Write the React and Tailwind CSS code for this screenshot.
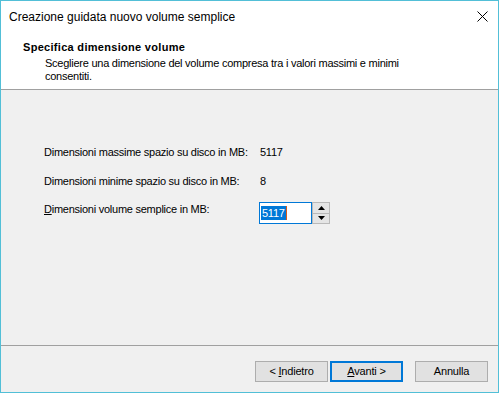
import React from "react";

const font = { fontFamily: '"Liberation Sans", Arial, sans-serif' };

const WizButton = ({ children, primary }) => (
  <button
    className={
      primary
        ? "w-[73px] h-[21px] bg-[#e1e1e1] border-2 border-[#0078d7] text-[11px] leading-[13px] tracking-[-0.2px] text-black"
        : "w-[73px] h-[21px] bg-[#e1e1e1] border border-[#adadad] text-[11px] leading-[13px] tracking-[-0.2px] text-black"
    }
  >
    {children}
  </button>
);

const SpinBox = () => (
  <div className="flex h-[22px] mt-[-1px]">
    <div className="w-[53px] h-[22px] bg-white border border-[#0078d7] flex items-center pl-[1px]">
      <span className="bg-[#0078d7] text-white text-[11px] leading-[14px] px-[1px]">5117</span>
      <span className="w-[1px] h-[14px] bg-[#d65a1a]" />
    </div>
    <div className="w-[18px] h-[22px] flex flex-col border border-[#b9b9b9] bg-[#e5e5e5]">
      <div className="flex-1 flex items-center justify-center border-b border-[#b9b9b9]">
        <svg width="7" height="4" viewBox="0 0 7 4">
          <path d="M0 4 L3.5 0 L7 4 Z" fill="#000" />
        </svg>
      </div>
      <div className="flex-1 flex items-center justify-center">
        <svg width="7" height="4" viewBox="0 0 7 4">
          <path d="M0 0 L7 0 L3.5 4 Z" fill="#000" />
        </svg>
      </div>
    </div>
  </div>
);

export default function App() {
  return (
    <div
      className="w-[499px] h-[393px] border border-[#52bfd7] flex flex-col bg-[#f0f0f0] text-black"
      style={font}
    >
      {/* title bar */}
      <div className="h-[30px] bg-white flex items-center justify-between pl-[8px] pr-[10px]">
        <span className="text-[12px] leading-[14px] pt-[1px]">Creazione guidata nuovo volume semplice</span>
        <svg width="11" height="11" viewBox="0 0 11 11" className="mt-[1px]">
          <path d="M0.5 0.5 L10.5 10.5 M10.5 0.5 L0.5 10.5" stroke="#000" strokeWidth="1" />
        </svg>
      </div>

      {/* header */}
      <div className="h-[59px] bg-white border-b border-[#a0a0a0] pt-[10px] pl-[22px]">
        <div className="text-[11px] leading-[13px] font-bold tracking-[0.3px]">Specifica dimensione volume</div>
        <div className="text-[11px] leading-[13px] tracking-[-0.25px] pl-[22px] mt-[3px] w-[400px]">
          Scegliere una dimensione del volume compresa tra i valori massimi e minimi consentiti.
        </div>
      </div>

      {/* body */}
      <div className="flex-1 border-b border-[#a0a0a0] pt-[56px] pl-[43px] text-[11px] leading-[13px] tracking-[-0.25px]">
        <div className="flex">
          <span className="w-[215px]">Dimensioni massime spazio su disco in MB:</span>
          <span className="pl-[1px]">5117</span>
        </div>
        <div className="flex mt-[16px]">
          <span className="w-[215px]">Dimensioni minime spazio su disco in MB:</span>
          <span className="pl-[1px]">8</span>
        </div>
        <div className="flex items-start mt-[15px]">
          <span className="w-[215px]">
            <span className="underline">D</span>imensioni volume semplice in MB:
          </span>
          <SpinBox />
        </div>
      </div>

      {/* footer */}
      <div className="h-[46px] flex items-start justify-end pt-[15px] pr-[10px]">
        <WizButton>
          &lt; <span className="underline">I</span>ndietro
        </WizButton>
        <div className="w-[2px]" />
        <WizButton primary>
          <span className="underline">A</span>vanti &gt;
        </WizButton>
        <div className="w-[12px]" />
        <WizButton>Annulla</WizButton>
      </div>
    </div>
  );
}
